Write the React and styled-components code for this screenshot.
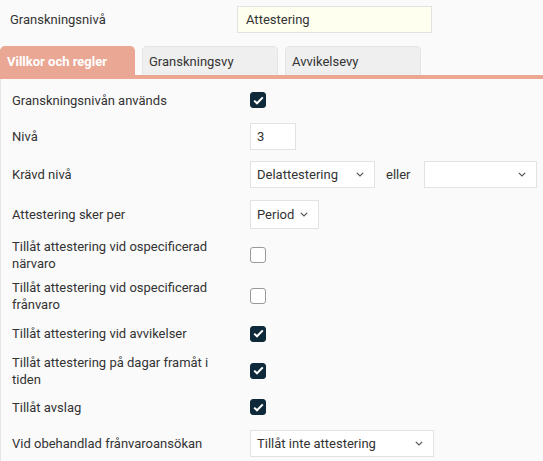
import React from 'react'
import styled, { createGlobalStyle } from 'styled-components'

const Global = createGlobalStyle`
  html, body {
    margin: 0;
    padding: 0;
    background: #fafafa;
    font-family: Roboto, "Liberation Sans", Arial, sans-serif;
    font-size: 13px;
    color: #333;
  }
`

const Page = styled.div`
  width: 543px;
  height: 461px;
  overflow: hidden;
  background: #fafafa;
`

const Header = styled.div`
  display: grid;
  grid-template-columns: 227px 195px;
  align-items: center;
  padding: 6px 0 0 10px;
  height: 27px;
`

const HeaderInput = styled.div`
  box-sizing: border-box;
  height: 27px;
  border: 1px solid #e2e2e2;
  background: #fffff0;
  padding: 0 8px;
  display: flex;
  align-items: center;
`

const Tabs = styled.div`
  display: flex;
  gap: 7px;
  margin-top: 13px;
  border-bottom: 4px solid #eaa794;
`

const Tab = styled.div`
  box-sizing: border-box;
  width: ${p => (p.$active ? 135 : 136)}px;
  height: 29px;
  padding: 0 6px;
  display: flex;
  align-items: center;
  border-radius: 5px 5px 0 0;
  background: ${p => (p.$active ? '#eaa794' : '#efefef')};
  border: 1px solid ${p => (p.$active ? '#eaa794' : '#e4e4e4')};
  border-bottom: none;
  color: ${p => (p.$active ? '#fff' : '#333')};
  font-weight: ${p => (p.$active ? 700 : 400)};
`

const Body = styled.div`
  border-left: 1px solid #e6e6e6;
  padding: 3px 0 0 11px;
  height: 400px;
`

const Row = styled.div`
  display: grid;
  grid-template-columns: 238px 1fr;
  align-items: center;
  height: ${p => p.$h}px;
`

const Label = styled.div`
  line-height: 17px;
  padding-right: 20px;
`

const Controls = styled.div`
  display: flex;
  align-items: center;
  gap: 11px;
`

const Or = styled.span`
  margin-right: 2px;
`

const Check = styled.div`
  box-sizing: border-box;
  width: 16px;
  height: 16px;
  border-radius: 3px;
  background: ${p => (p.$on ? '#0e2a3a' : '#fff')};
  border: 1px solid ${p => (p.$on ? '#0e2a3a' : '#9a9a9a')};
  display: flex;
  align-items: center;
  justify-content: center;
`

const TextInput = styled.div`
  box-sizing: border-box;
  width: ${p => p.$w}px;
  height: 27px;
  border: 1px solid #e2e2e2;
  background: #fff;
  padding: 0 6px;
  display: flex;
  align-items: center;
`

const Select = styled.div`
  box-sizing: border-box;
  width: ${p => p.$w}px;
  height: ${p => p.$h || 27}px;
  border: 1px solid #e2e2e2;
  background: #fff;
  padding: 0 10px 0 6px;
  display: flex;
  align-items: center;
  justify-content: space-between;
`

const Chevron = () => (
  <svg width="8" height="5" viewBox="0 0 8 5">
    <path d="M0.8 0.8 L4 4 L7.2 0.8" fill="none" stroke="#555" strokeWidth="1.2" />
  </svg>
)

const Tick = () => (
  <svg width="11" height="9" viewBox="0 0 11 9">
    <path d="M1.2 4.6 L4 7.3 L9.8 1.4" fill="none" stroke="#fff" strokeWidth="2" />
  </svg>
)

const CheckBox = ({ on }) => <Check $on={on}>{on && <Tick />}</Check>

export default function App() {
  return (
    <Page>
      <Global />
      <Header>
        <span>Granskningsnivå</span>
        <HeaderInput>Attestering</HeaderInput>
      </Header>
      <Tabs>
        <Tab $active>Villkor och regler</Tab>
        <Tab>Granskningsvy</Tab>
        <Tab>Avvikelsevy</Tab>
      </Tabs>
      <Body>
        <Row $h={36}>
          <Label>Granskningsnivån används</Label>
          <Controls><CheckBox on /></Controls>
        </Row>
        <Row $h={37}>
          <Label>Nivå</Label>
          <Controls><TextInput $w={46}>3</TextInput></Controls>
        </Row>
        <Row $h={39}>
          <Label>Krävd nivå</Label>
          <Controls>
            <Select $w={125}>Delattestering<Chevron /></Select>
            <Or>eller</Or>
            <Select $w={113}><span /><Chevron /></Select>
          </Controls>
        </Row>
        <Row $h={40}>
          <Label>Attestering sker per</Label>
          <Controls><Select $w={69} $h={29}>Period<Chevron /></Select></Controls>
        </Row>
        <Row $h={42}>
          <Label>Tillåt attestering vid ospecificerad närvaro</Label>
          <Controls><CheckBox /></Controls>
        </Row>
        <Row $h={39}>
          <Label>Tillåt attestering vid ospecificerad frånvaro</Label>
          <Controls><CheckBox /></Controls>
        </Row>
        <Row $h={37}>
          <Label>Tillåt attestering vid avvikelser</Label>
          <Controls><CheckBox on /></Controls>
        </Row>
        <Row $h={37}>
          <Label>Tillåt attestering på dagar framåt i tiden</Label>
          <Controls><CheckBox on /></Controls>
        </Row>
        <Row $h={36}>
          <Label>Tillåt avslag</Label>
          <Controls><CheckBox on /></Controls>
        </Row>
        <Row $h={36}>
          <Label>Vid obehandlad frånvaroansökan</Label>
          <Controls><Select $w={184}>Tillåt inte attestering<Chevron /></Select></Controls>
        </Row>
      </Body>
    </Page>
  )
}
